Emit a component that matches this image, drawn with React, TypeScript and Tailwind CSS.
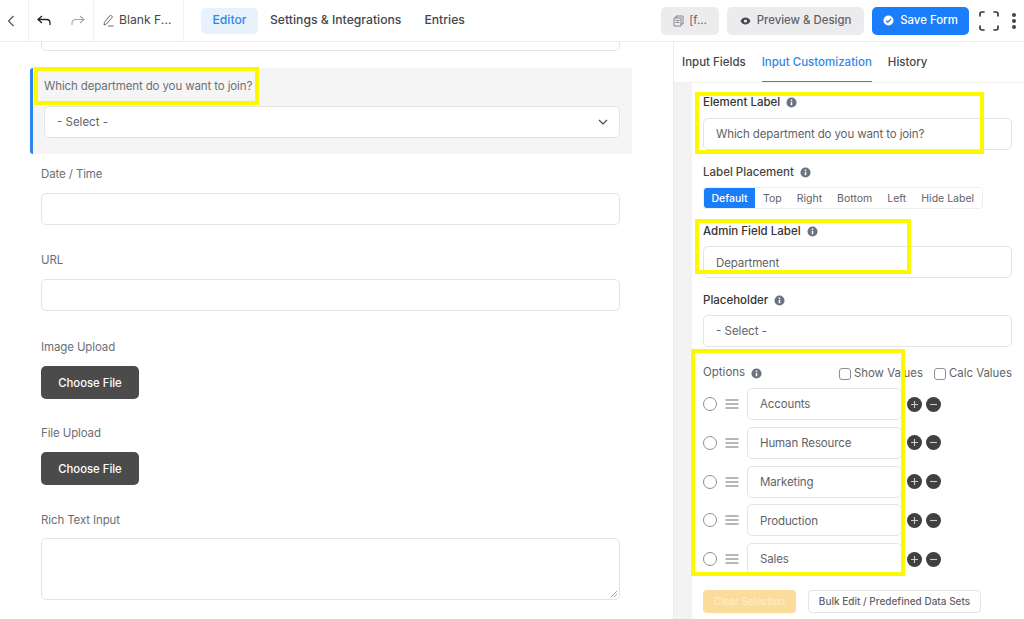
import React from "react";

const Info = ({ c = "#6b7280" }: { c?: string }) => (
  <svg width="11" height="11" viewBox="0 0 12 12" className="shrink-0">
    <circle cx="6" cy="6" r="5.5" fill={c} />
    <rect x="5.2" y="5.2" width="1.6" height="3.8" fill="#fff" />
    <rect x="5.2" y="2.8" width="1.6" height="1.5" fill="#fff" />
  </svg>
);

const Field = ({ label, top }: { label: string; top: string }) => (
  <div className={`${top} flex flex-col`}>
    <div className="text-[11.5px] leading-[16px] tracking-[-0.12px] text-[#6b6f76]">{label}</div>
    <div className="mt-[11px] h-[32px] w-[579px] rounded-[5px] border border-[#e2e4e8] bg-white" />
  </div>
);

const Upload = ({ label, top, mt }: { label: string; top: string; mt: string }) => (
  <div className={`${top} flex flex-col`}>
    <div className="text-[11.5px] leading-[16px] tracking-[-0.12px] text-[#6b6f76]">{label}</div>
    <div className={`${mt} flex h-[33px] w-[98px] items-center justify-center rounded-[5px] bg-[#4b4b4b] pt-[1px] text-[11.3px] font-medium text-white`}>
      Choose File
    </div>
  </div>
);

const Opt = ({ name }: { name: string }) => (
  <div className="flex h-[32px] items-center">
    <span className="h-[14px] w-[14px] rounded-full border border-[#8b8f96] bg-white" />
    <svg width="14" height="10" viewBox="0 0 14 10" className="ml-[8px]">
      <path d="M0.5 1H13.5M0.5 5H13.5M0.5 9H13.5" stroke="#6b6f76" strokeWidth="1" />
    </svg>
    <div className="ml-[8px] flex h-[32px] w-[155px] items-center rounded-[5px] border border-[#e2e4e8] bg-white pl-[12px] pt-[2px] text-[11.5px] tracking-[-0.12px] text-[#5f6368]">
      {name}
    </div>
    <span className="ml-[5px] flex h-[15px] w-[15px] items-center justify-center rounded-full bg-[#404040]">
      <svg width="9" height="9" viewBox="0 0 9 9"><path d="M1 4.5H8M4.5 1V8" stroke="#c9ccd1" strokeWidth="1.1" /></svg>
    </span>
    <span className="ml-[4px] flex h-[15px] w-[15px] items-center justify-center rounded-full bg-[#404040]">
      <svg width="9" height="9" viewBox="0 0 9 9"><path d="M1 4.5H8" stroke="#c9ccd1" strokeWidth="1.1" /></svg>
    </span>
  </div>
);

const Check = ({ label }: { label: string }) => (
  <span className="flex items-center gap-[3px] text-[11.4px] text-[#5f6368]">
    <span className="h-[12px] w-[12px] rounded-[3px] border border-[#8b8f96] bg-white" />
    {label}
  </span>
);

export default function App() {
  return (
    <div className="relative flex h-[619px] w-[1024px] flex-col overflow-hidden bg-white font-['Inter',sans-serif]">
      {/* Header */}
      <header className="flex h-[42px] shrink-0 items-center border-b border-[#ececee] bg-white">
        <div className="flex h-full w-[29px] items-center justify-center border-r border-[#f0f0f2]">
          <svg width="8" height="12" viewBox="0 0 8 12" fill="none" className="-ml-[6px]"><path d="M6.5 1L1.5 6L6.5 11" stroke="#4b5563" strokeWidth="1.2" /></svg>
        </div>
        <div className="flex h-full w-[65px] items-center border-r border-[#f0f0f2] pl-[8px]">
          <svg width="14" height="11" viewBox="0 0 14 11" fill="none"><path d="M5 1L1 4.5L5 8M1 4.5H9.5C11.5 4.5 13 6 13 8V10" stroke="#222" strokeWidth="1.3" /></svg>
          <svg width="14" height="11" viewBox="0 0 14 11" fill="none" className="ml-[20px]"><path d="M9 1L13 4.5L9 8M13 4.5H4.5C2.5 4.5 1 6 1 8V10" stroke="#a3a6ab" strokeWidth="1.1" /></svg>
        </div>
        <div className="flex h-full w-[90px] items-center gap-[5px] border-r border-[#f0f0f2] pl-[9px] text-[12.2px] text-[#44474d]">
          <svg width="11" height="13" viewBox="0 0 11 13" fill="none"><path d="M7.5 1L9.5 3L3.5 10L1 11L1.5 8.3ZM5 12H10.5" stroke="#55585e" strokeWidth="0.9" /></svg>
          <span>Blank F...</span>
        </div>
        <nav className="ml-[17px] flex items-center text-[12.2px]">
          <span className="flex h-[26px] w-[57px] items-center justify-center rounded-[5px] bg-[#e8f2fd] font-medium text-[#2f86ea]">Editor</span>
          <span className="ml-[12px] font-medium text-[#44474d]">Settings &amp; Integrations</span>
          <span className="ml-[23px] font-medium text-[#44474d]">Entries</span>
        </nav>
        <div className="ml-auto flex items-center">
          <span className="flex h-[28px] w-[58px] items-center justify-center gap-[5px] rounded-[5px] bg-[#ececee] text-[11.4px] text-[#5f6368]">
            <svg width="11" height="12" viewBox="0 0 11 12" fill="none"><path d="M3 3V1H10V9H8M1 3H8V11H1ZM2.5 5.5H6.5M2.5 7.5H6.5" stroke="#6b6f76" strokeWidth="0.8" /></svg>
            [f...
          </span>
          <span className="ml-[8px] flex h-[28px] w-[137px] items-center justify-center gap-[6px] rounded-[5px] bg-[#ececee] text-[11.4px] font-medium text-[#5f6368]">
            <svg width="11" height="8" viewBox="0 0 11 8"><path d="M0.5 4C2 1.3 3.6 0.5 5.5 0.5S9 1.3 10.5 4C9 6.7 7.4 7.5 5.5 7.5S2 6.7 0.5 4Z" fill="#44474d" /><circle cx="5.5" cy="4" r="1.6" fill="#ececee" /></svg>
            Preview &amp; Design
          </span>
          <span className="ml-[8px] flex h-[28px] w-[97px] items-center justify-center gap-[6px] rounded-[5px] bg-[#1a7efb] text-[11.4px] font-medium text-white">
            <svg width="11" height="11" viewBox="0 0 11 11"><circle cx="5.5" cy="5.5" r="5" fill="#fff" /><path d="M3 5.6L4.8 7.3L8 3.9" stroke="#1a7efb" strokeWidth="1.3" fill="none" /></svg>
            Save Form
          </span>
          <svg width="20" height="20" viewBox="0 0 20 20" fill="none" className="ml-[10px]"><path d="M1 5V3Q1 1 3 1H5M15 1H17Q19 1 19 3V5M1 15V17Q1 19 3 19H5M15 19H17Q19 19 19 17V15" stroke="#333" strokeWidth="1.6" strokeLinecap="round" /></svg>
          <svg width="6" height="18" viewBox="0 0 6 18" className="ml-[12px] mr-[7px]"><circle cx="3" cy="3" r="2" fill="#444" /><circle cx="3" cy="9" r="2" fill="#444" /><circle cx="3" cy="15" r="2" fill="#444" /></svg>
        </div>
      </header>

      <div className="flex min-h-0 flex-1">
        {/* Left canvas */}
        <main className="relative w-[673px] shrink-0 overflow-hidden pl-[41px]">
          <div className="-mt-[20px] h-[29px] w-[579px] rounded-[5px] border border-[#e2e4e8] bg-white" />
          <section className="-ml-[11px] mt-[17px] h-[86px] w-[602px] rounded-l-[3px] border-l-[3px] border-[#2f86ea] bg-[#f5f5f5] pl-[11px] pt-[10px]">
            <div className="text-[11.5px] leading-[16px] tracking-[-0.12px] text-[#6b6f76]">Which department do you want to join?</div>
            <div className="mt-[12px] flex h-[32px] w-[576px] items-center justify-between rounded-[5px] border border-[#e2e4e8] bg-white pl-[12px] pr-[11px] text-[11.5px] text-[#5f6368]">
              <span className="pt-[2px]">- Select -</span>
              <svg width="10" height="6" viewBox="0 0 10 6" fill="none"><path d="M1 1L5 5L9 1" stroke="#44474d" strokeWidth="1.2" /></svg>
            </div>
          </section>
          <Field label="Date / Time" top="mt-[12px]" />
          <Field label="URL" top="mt-[27px]" />
          <Upload label="Image Upload" top="mt-[28px]" mt="mt-[11px]" />
          <Upload label="File Upload" top="mt-[26px]" mt="mt-[11px]" />
          <div className="mt-[27px] flex flex-col">
            <div className="text-[11.5px] leading-[16px] tracking-[-0.12px] text-[#6b6f76]">Rich Text Input</div>
            <div className="relative mt-[10px] h-[62px] w-[579px] rounded-[5px] border border-[#e2e4e8] bg-white">
              <svg width="8" height="8" viewBox="0 0 8 8" className="absolute bottom-[1px] right-[1px]"><path d="M7 1L1 7M7 4L4 7" stroke="#8b8f96" strokeWidth="0.8" /></svg>
            </div>
          </div>

          {/* highlight */}
          <div className="absolute left-[34px] top-[25px] h-[38px] w-[225px] border-[4px] border-[#fbf800]" />
        </main>

        {/* Right panel */}
        <aside className="relative flex min-w-0 flex-1 flex-col border-l border-[#ececee]">
          <div className="flex h-[41px] shrink-0 items-center border-b border-[#f0f0f2] pl-[8px] pt-[1px] text-[11.5px] font-medium text-[#44474d]">
            <span>Input Fields</span>
            <span className="relative ml-[16px] flex h-full items-center text-[#2f86ea]">
              Input Customization
              <span className="absolute inset-x-0 bottom-0 h-[1px] bg-[#2f86ea]" />
            </span>
            <span className="ml-[16px]">History</span>
          </div>
          <div className="flex min-h-0 flex-1">
            <div className="w-[18px] shrink-0 bg-[#f3f3f3]" />
            <div className="min-w-0 flex-1 pl-[11px] pt-[12px]">
              <div className="flex items-center gap-[6px] text-[11.5px] font-medium leading-[14px] text-[#333]">Element Label <Info /></div>
              <div className="mt-[9px] flex h-[32px] w-[309px] items-center rounded-[5px] border border-[#e2e4e8] pl-[12px] pt-[2px] text-[11.5px] tracking-[-0.12px] text-[#5f6368]">Which department do you want to join?</div>

              <div className="mt-[15px] flex items-center gap-[6px] text-[11.5px] font-medium leading-[14px] text-[#444]">Label Placement <Info /></div>
              <div className="mt-[8px] flex h-[22px] w-[280px] items-center rounded-[3px] border border-[#eeeff1] text-[10.5px] text-[#5f6368]">
                <span className="flex h-full w-[51px] items-center justify-center rounded-l-[3px] bg-[#1a7efb] pt-[1px] font-medium text-white">Default</span>
                <span className="ml-[8px] pt-[1px]">Top</span>
                <span className="ml-[15px] pt-[1px]">Right</span>
                <span className="ml-[15px] pt-[1px]">Bottom</span>
                <span className="ml-[15px] pt-[1px]">Left</span>
                <span className="ml-[15px] pt-[1px]">Hide Label</span>
              </div>

              <div className="mt-[15px] flex items-center gap-[6px] text-[11.5px] font-medium leading-[14px] text-[#333]">Admin Field Label <Info /></div>
              <div className="mt-[8px] flex h-[32px] w-[309px] items-end rounded-[5px] border border-[#e2e4e8] pb-[5px] pl-[12px] text-[11.5px] tracking-[-0.12px] text-[#5f6368]">Department</div>

              <div className="mt-[15px] flex items-center gap-[6px] text-[11.5px] font-medium leading-[14px] text-[#333]">Placeholder <Info /></div>
              <div className="mt-[8px] flex h-[32px] w-[309px] items-center rounded-[5px] border border-[#e2e4e8] pl-[12px] pt-[2px] text-[11.5px] text-[#5f6368]">- Select -</div>

              <div className="mt-[19px] flex h-[14px] w-[309px] items-center">
                <span className="flex items-center gap-[6px] text-[11.5px] text-[#5f6368]">Options <Info /></span>
                <span className="ml-auto flex items-center gap-[11px] pt-[1px]">
                  <Check label="Show Values" />
                  <Check label="Calc Values" />
                </span>
              </div>
              <div className="mt-[8px] flex flex-col gap-[6.75px]">
                <Opt name="Accounts" />
                <Opt name="Human Resource" />
                <Opt name="Marketing" />
                <Opt name="Production" />
                <Opt name="Sales" />
              </div>
              <div className="mt-[15px] flex items-center">
                <span className="flex h-[23px] w-[93px] items-center justify-center rounded-[4px] bg-[#fcdc9a] text-[9.9px] font-medium text-[#fdeccb]">Clear Selection</span>
                <span className="ml-[12px] flex h-[23px] w-[173px] items-center justify-center rounded-[4px] border border-[#e2e4e8] text-[10px] font-medium text-[#5f6368]">Bulk Edit / Predefined Data Sets</span>
              </div>
            </div>
          </div>

          {/* highlights */}
          <div className="absolute left-[21px] top-[50px] h-[62px] w-[289px] border-[4px] border-[#fbf800]" />
          <div className="absolute left-[21px] top-[177px] h-[55px] w-[216px] border-[4px] border-[#fbf800]" />
          <div className="absolute left-[17px] top-[307px] h-[227px] w-[214px] border-[4px] border-[#fbf800]" />
        </aside>
      </div>
    </div>
  );
}
